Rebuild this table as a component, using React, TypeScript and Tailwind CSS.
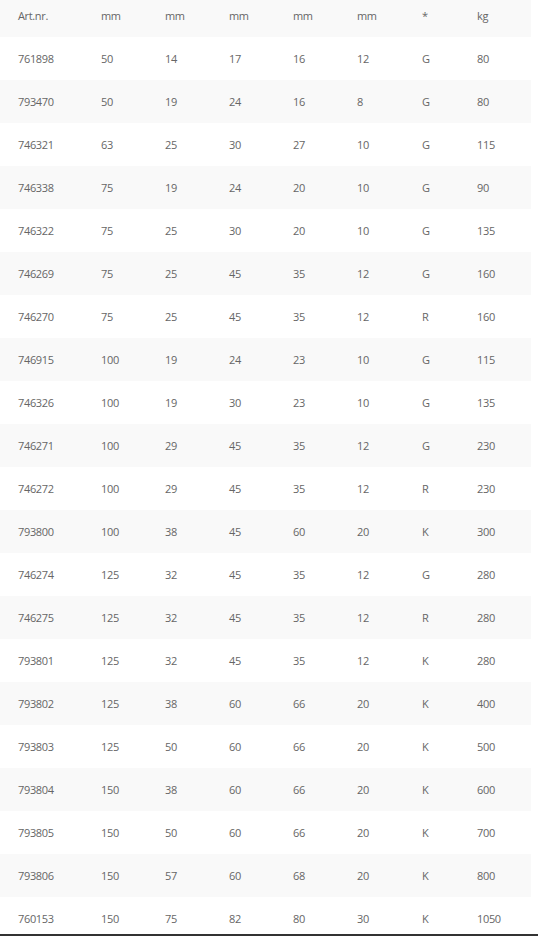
const header = ['Art.nr.', 'mm', 'mm', 'mm', 'mm', 'mm', '*', 'kg'];

const rows: string[][] = [
  ['761898', '50', '14', '17', '16', '12', 'G', '80'],
  ['793470', '50', '19', '24', '16', '8', 'G', '80'],
  ['746321', '63', '25', '30', '27', '10', 'G', '115'],
  ['746338', '75', '19', '24', '20', '10', 'G', '90'],
  ['746322', '75', '25', '30', '20', '10', 'G', '135'],
  ['746269', '75', '25', '45', '35', '12', 'G', '160'],
  ['746270', '75', '25', '45', '35', '12', 'R', '160'],
  ['746915', '100', '19', '24', '23', '10', 'G', '115'],
  ['746326', '100', '19', '30', '23', '10', 'G', '135'],
  ['746271', '100', '29', '45', '35', '12', 'G', '230'],
  ['746272', '100', '29', '45', '35', '12', 'R', '230'],
  ['793800', '100', '38', '45', '60', '20', 'K', '300'],
  ['746274', '125', '32', '45', '35', '12', 'G', '280'],
  ['746275', '125', '32', '45', '35', '12', 'R', '280'],
  ['793801', '125', '32', '45', '35', '12', 'K', '280'],
  ['793802', '125', '38', '60', '66', '20', 'K', '400'],
  ['793803', '125', '50', '60', '66', '20', 'K', '500'],
  ['793804', '150', '38', '60', '66', '20', 'K', '600'],
  ['793805', '150', '50', '60', '66', '20', 'K', '700'],
  ['793806', '150', '57', '60', '68', '20', 'K', '800'],
  ['760153', '150', '75', '82', '80', '30', 'K', '1050'],
];

// column widths, text sits 18px in from each column edge
const cols = ['w-[83px]', 'w-[64px]', 'w-[64px]', 'w-[64px]', 'w-[64px]', 'w-[65px]', 'w-[55px]', 'w-[72px]'];

function Row({ cells, shaded, last }: { cells: string[]; shaded: boolean; last?: boolean }) {
  return (
    <div className={`flex ${last ? 'h-[37px]' : 'h-[43px]'} ${shaded ? 'bg-[#f9f9f9]' : 'bg-white'}`}>
      {cells.map((c, i) => (
        <div key={i} className={`${cols[i]} shrink-0 pl-[18px] pt-[14px] leading-[15px]`}>
          {c}
        </div>
      ))}
    </div>
  );
}

export default function App() {
  return (
    <div className="w-[538px] h-[936px] overflow-hidden bg-white text-[11px] tracking-[-0.35px] text-[#666] font-['Open_Sans',sans-serif]">
      <div className="w-[531px]">
        <div className="flex h-[37px] bg-[#f9f9f9]">
          {header.map((h, i) => (
            <div key={i} className={`${cols[i]} shrink-0 pl-[18px] pt-[8px] leading-[15px]`}>
              {h}
            </div>
          ))}
        </div>
        {rows.map((r, i) => (
          <Row key={r[0]} cells={r} shaded={i % 2 === 1} last={i === rows.length - 1} />
        ))}
      </div>
      <div className="h-[2px] bg-[#333]" />
    </div>
  );
}
